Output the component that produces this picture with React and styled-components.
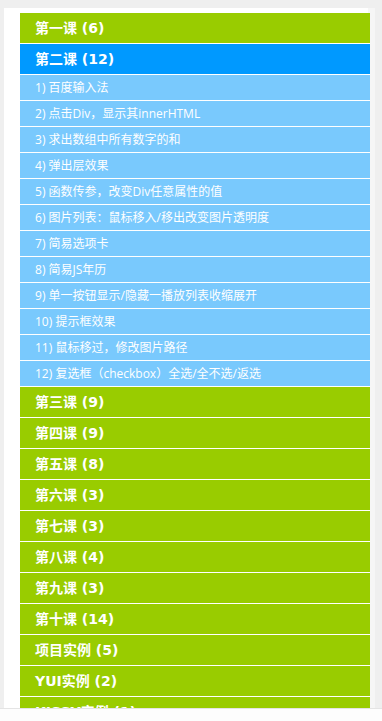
import React from "react"
import styled, {createGlobalStyle} from "styled-components";

const lessons = [
    {title: "第一课", count: 6},
    {
        title: "第二课", count: 12, open: true, items: [
            "百度输入法",
            "点击Div，显示其innerHTML",
            "求出数组中所有数字的和",
            "弹出层效果",
            "函数传参，改变Div任意属性的值",
            "图片列表：鼠标移入/移出改变图片透明度",
            "简易选项卡",
            "简易JS年历",
            "单一按钮显示/隐藏一播放列表收缩展开",
            "提示框效果",
            "鼠标移过，修改图片路径",
            "复选框（checkbox）全选/全不选/返选",
        ]
    },
    {title: "第三课", count: 9},
    {title: "第四课", count: 9},
    {title: "第五课", count: 8},
    {title: "第六课", count: 3},
    {title: "第七课", count: 3},
    {title: "第八课", count: 4},
    {title: "第九课", count: 3},
    {title: "第十课", count: 14},
    {title: "项目实例", count: 5},
    {title: "YUI实例", count: 2},
    {title: "KISSY实例", count: 1},
]

const App = () => {
    return (
        <>
            <GlobalStyle/>
            <Panel>
                <List>
                    {lessons.map(lesson => (
                        <Lesson key={lesson.title}>
                            <Heading active={lesson.open}>
                                {lesson.title} ({lesson.count})
                            </Heading>
                            {lesson.open && (
                                <SubList>
                                    {lesson.items.map((item, i) => (
                                        <Item key={item}>{i + 1}) {item}</Item>
                                    ))}
                                </SubList>
                            )}
                        </Lesson>
                    ))}
                </List>
            </Panel>
            <BottomBar/>
        </>
    )
}

export default App

const GlobalStyle = createGlobalStyle`
  html, body {
    margin: 0;
    padding: 0;
    background: #efefef;
    overflow: hidden;
  }

  body {
    font-family: "Noto Sans CJK SC", "DejaVu Sans", sans-serif;
  }
`

//-------------------------------------------

const Panel = styled.div`
  margin: 8px 7px 0 4px;
  padding: 5px 5px 0 16px;
  background: #fff;
  box-shadow: -9px 0 0 -2px #f6f6f6 inset;
`

const List = styled.ul`
  list-style: none;
  margin: 0;
  padding: 0;
`

const Lesson = styled.li`
  display: flex;
  flex-direction: column;
`

const Heading = styled.h2`
  margin: 0;
  height: 30px;
  line-height: 30px;
  padding-left: 15px;
  border-bottom: 1px solid #fff;
  background: ${props => props.active ? "#0099ff" : "#99cc00"};
  color: #fff;
  font-family: "DejaVu Sans", "Noto Sans CJK SC", sans-serif;
  font-size: 14px;
  font-weight: 700;
  white-space: nowrap;
  overflow: hidden;
`

const SubList = styled.ul`
  list-style: none;
  margin: 0;
  padding: 0;
`

const Item = styled.li`
  height: 25px;
  line-height: 25px;
  padding-left: 15px;
  border-bottom: 1px solid #fff;
  background: #79c9fd;
  color: #fff;
  font-family: "Open Sans", "Noto Sans CJK SC", sans-serif;
  font-size: 12px;
  white-space: nowrap;
  overflow: hidden;
`

const BottomBar = styled.div`
  position: fixed;
  left: 0;
  right: 0;
  bottom: 0;
  height: 12px;
  background: #fdfdfd;
  border-top: 1px solid #e4e4e4;
`
